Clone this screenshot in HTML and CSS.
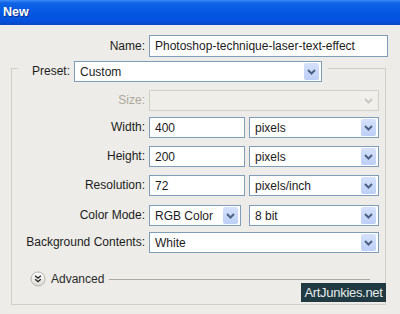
FILE: index.html
```html
<!DOCTYPE html>
<html>
<head>
<meta charset="utf-8">
<link rel="stylesheet" href="styles.css">
</head>
<body>
<div class="window">
  <div class="titlebar">New</div>
  <div class="name-row">
    <span class="lbl name-lbl">Name:</span>
    <div class="field name-field">Photoshop-technique-laser-text-effect</div>
  </div>
  <fieldset class="group">
    <legend class="preset">
      <span class="preset-lbl">Preset:</span>
      <div class="field select preset-select"><span class="val">Custom</span><span class="btn"><svg width="9" height="6" viewBox="0 0 9 6"><path d="M1 1 L4.5 4.5 L8 1" fill="none" stroke="#4d6185" stroke-width="2"/></svg></span></div>
    </legend>
    <div class="grid">
      <span class="lbl dis">Size:</span>
      <div class="field select wide disabled"><span class="val"></span><span class="btn"><svg width="9" height="6" viewBox="0 0 9 6"><path d="M1 1 L4.5 4.5 L8 1" fill="none" stroke="#c9c9c2" stroke-width="2"/></svg></span></div>

      <span class="lbl">Width:</span>
      <div class="field">400</div>
      <div class="field select"><span class="val">pixels</span><span class="btn"><svg width="9" height="6" viewBox="0 0 9 6"><path d="M1 1 L4.5 4.5 L8 1" fill="none" stroke="#4d6185" stroke-width="2"/></svg></span></div>

      <span class="lbl">Height:</span>
      <div class="field">200</div>
      <div class="field select"><span class="val">pixels</span><span class="btn"><svg width="9" height="6" viewBox="0 0 9 6"><path d="M1 1 L4.5 4.5 L8 1" fill="none" stroke="#4d6185" stroke-width="2"/></svg></span></div>

      <span class="lbl">Resolution:</span>
      <div class="field">72</div>
      <div class="field select"><span class="val">pixels/inch</span><span class="btn"><svg width="9" height="6" viewBox="0 0 9 6"><path d="M1 1 L4.5 4.5 L8 1" fill="none" stroke="#4d6185" stroke-width="2"/></svg></span></div>

      <span class="lbl">Color Mode:</span>
      <div class="field select mode"><span class="val">RGB Color</span><span class="btn"><svg width="9" height="6" viewBox="0 0 9 6"><path d="M1 1 L4.5 4.5 L8 1" fill="none" stroke="#4d6185" stroke-width="2"/></svg></span></div>
      <div class="field select"><span class="val">8 bit</span><span class="btn"><svg width="9" height="6" viewBox="0 0 9 6"><path d="M1 1 L4.5 4.5 L8 1" fill="none" stroke="#4d6185" stroke-width="2"/></svg></span></div>

      <span class="lbl">Background Contents:</span>
      <div class="field select wide"><span class="val">White</span><span class="btn"><svg width="9" height="6" viewBox="0 0 9 6"><path d="M1 1 L4.5 4.5 L8 1" fill="none" stroke="#4d6185" stroke-width="2"/></svg></span></div>
    </div>
    <div class="advanced">
      <svg class="adv-btn" width="16" height="16" viewBox="0 0 16 16">
        <defs>
          <linearGradient id="g" x1="0" y1="0" x2="0" y2="1">
            <stop offset="0" stop-color="#ffffff"/>
            <stop offset="1" stop-color="#dcdcd6"/>
          </linearGradient>
        </defs>
        <circle cx="8" cy="8" r="7" fill="url(#g)" stroke="#b4b4ac" stroke-width="1"/>
        <path d="M5.2 4.8 L8 7.2 L10.8 4.8 M5.2 8.3 L8 10.7 L10.8 8.3" fill="none" stroke="#222" stroke-width="1.4"/>
      </svg>
      <span class="adv-lbl">Advanced</span>
      <span class="adv-line"></span>
    </div>
  </fieldset>
  <div class="watermark">ArtJunkies.net</div>
</div>
</body>
</html>
```

FILE: styles.css
```css
html, body {
  margin: 0;
  padding: 0;
}
body {
  background: #edece8;
  font-family: "Liberation Sans", Arial, sans-serif;
  font-size: 12px;
  color: #1c1c1c;
}
.window {
  position: relative;
  width: 400px;
  height: 314px;
  overflow: hidden;
  background: #edece8;
}
.titlebar {
  height: 25px;
  line-height: 25px;
  padding-left: 3px;
  box-sizing: border-box;
  font-weight: bold;
  font-size: 12.5px;
  color: #ffffff;
  text-shadow: 1px 1px 0 #0b2f8a;
  background: linear-gradient(#3d8cf5 0, #0f63e6 3px, #0558e2 50%, #0450dc 85%, #0a46c2 100%);
}
.name-row {
  display: flex;
  align-items: center;
  margin-top: 10px;
  height: 22px;
}
.name-lbl {
  width: 145px;
  text-align: right;
  margin-right: 4px;
}
.field {
  box-sizing: border-box;
  height: 21px;
  border: 1px solid #7f9db9;
  background: #ffffff;
  padding-left: 5px;
  display: flex;
  align-items: center;
  white-space: nowrap;
  overflow: hidden;
}
.name-field {
  width: 239px;
  height: 22px;
}
.select {
  padding-right: 2px;
}
.select .val {
  flex: 1;
}
.btn {
  width: 15px;
  height: 17px;
  display: flex;
  align-items: center;
  justify-content: center;
  border-radius: 2px;
  background: linear-gradient(#d6e2fc, #bccff7);
}
.group {
  box-sizing: border-box;
  width: 375px;
  height: 244px;
  margin: 4px 0 0 11px;
  padding: 0;
  border: 1px solid #cfcfc4;
  border-radius: 0;
}
.preset {
  display: flex;
  align-items: flex-start;
  height: 14px;
  margin-left: 6px;
  padding: 0 6px 0 14px;
}
.preset-lbl {
  line-height: 21px;
  margin-right: 4px;
}
.preset-select {
  width: 248px;
}
.grid {
  display: grid;
  grid-template-columns: 133px 96px 130px;
  grid-template-rows: 27px 29px 29px 30px 27px 21px;
  column-gap: 4px;
  align-items: start;
  margin-top: 15px;
}
.lbl {
  text-align: right;
  line-height: 21px;
}
.grid .lbl {
  justify-self: end;
}
.dis {
  color: #aca899;
}
.wide {
  grid-column: span 2;
}
.disabled {
  border-color: #d2d1c8;
  background: #efeee9;
}
.disabled .btn {
  background: #f1f0ec;
}
.mode {
  width: 92px;
}
.advanced {
  display: flex;
  align-items: center;
  height: 16px;
  margin-top: 18px;
  padding-left: 18px;
}
.adv-btn {
  display: block;
}
.adv-lbl {
  margin-left: 5px;
  color: #2a2a2a;
}
.adv-line {
  flex: 1;
  height: 1px;
  background: #a9a9a1;
  margin: 0 15px 0 5px;
}
.watermark {
  position: absolute;
  left: 301px;
  top: 283px;
  width: 85px;
  height: 19px;
  box-sizing: border-box;
  background: #213940;
  color: #e4ecee;
  font-size: 13px;
  letter-spacing: -0.3px;
  line-height: 19px;
  text-align: center;
}
```
